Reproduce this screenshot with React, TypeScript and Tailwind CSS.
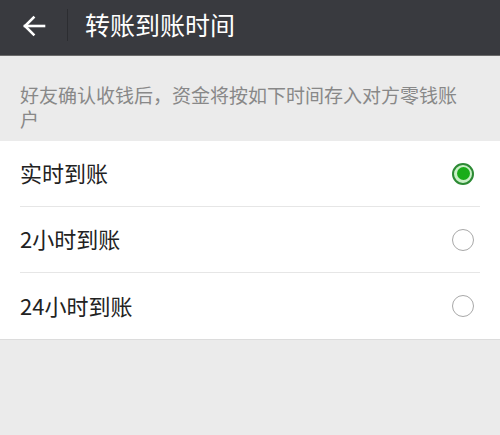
const font = { fontFamily: '"Noto Sans CJK SC", "Noto Sans", sans-serif' };

const options = ["实时到账", "2小时到账", "24小时到账"];

function Radio({ checked }: { checked: boolean }) {
  if (checked) {
    return (
      <div className="w-[22px] h-[22px] rounded-full border-2 border-[#2c8a34] bg-[#c9f0c6] flex items-center justify-center">
        <div className="w-[13px] h-[13px] rounded-full bg-[#1aad19]" />
      </div>
    );
  }
  return <div className="w-[22px] h-[22px] rounded-full border-[1.5px] border-[#a8a8a8]" />;
}

export default function App() {
  const selected = 0;
  return (
    <div className="w-[500px] h-[435px] bg-[#ebebeb] flex flex-col" style={font}>
      <div className="h-[56px] pb-[6px] bg-[#393a3f] flex items-center shrink-0 border-b border-[#6a6a6a]">
        <div className="w-[67px] flex justify-center pl-[1px] pt-[2px]">
          <svg width="24" height="22" viewBox="0 0 24 22" fill="none" stroke="#fff" strokeWidth="2.6" strokeLinecap="square">
            <path d="M3 11H22" />
            <path d="M11.5 2.5L3 11L11.5 19.5" />
          </svg>
        </div>
        <div className="w-px h-[32px] bg-[#2c2d31]" />
        <div className="ml-[17px] text-white text-[25px] leading-none">转账到账时间</div>
      </div>
      <div className="pl-5 pr-[34px] pt-[27px] pb-[10px] text-[#888] text-[19px] leading-[24px]">
        好友确认收钱后，资金将按如下时间存入对方零钱账户
      </div>
      <div className="bg-white border-b border-[#dcdcdc]">
        {options.map((o, i) => (
          <div key={o} className="pl-5">
            <div
              className={`h-[66px] flex items-center justify-between mr-5 pr-[6px] ${i < options.length - 1 ? "border-b border-[#e6e6e6]" : ""}`}
            >
              <span className="text-[22px] text-[#222] mb-[2px]">{o}</span>
              <Radio checked={i === selected} />
            </div>
          </div>
        ))}
      </div>
    </div>
  );
}
